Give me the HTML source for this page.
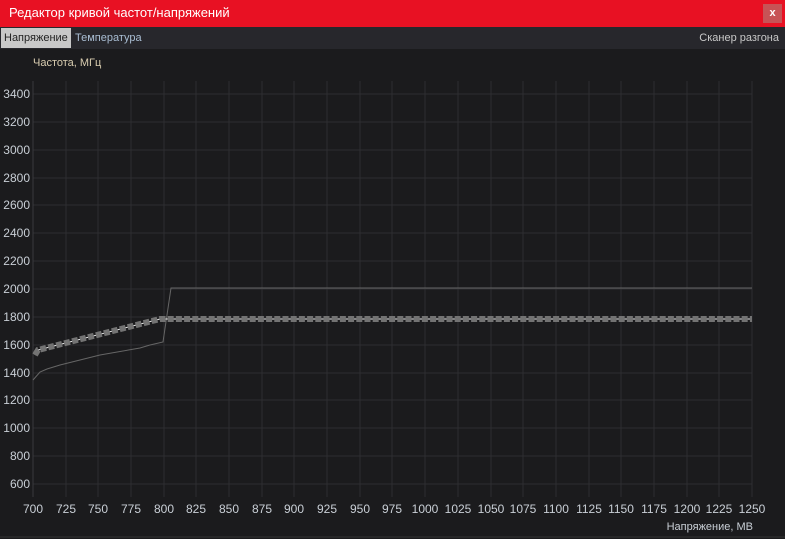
<!DOCTYPE html>
<html><head><meta charset="utf-8"><style>
body{margin:0;width:785px;height:539px;background:#1b1b1d;font-family:"Liberation Sans",sans-serif;overflow:hidden;position:relative}
.title{position:absolute;left:0;top:0;width:785px;height:27px;background:#e81123;color:#fff;font-size:13px;line-height:26px;padding-left:9px;box-sizing:border-box}
.x{position:absolute;right:3px;top:4px;width:19px;height:19px;background:#c75356;color:#fff;font-size:11px;font-weight:bold;text-align:center;line-height:18px}
.tabs{position:absolute;top:27px;left:0;width:785px;height:22px;background:#27272c;font-size:11px;line-height:22px;color:#a9bdd3}
.t1{position:absolute;left:1px;top:1px;height:20px;line-height:20px;padding:0 3px;background:#c8c8c8;color:#222}
.t2{position:absolute;left:75px}
.t3{position:absolute;right:6px;color:#c8c8c8}
svg{position:absolute;left:0;top:0}
text{font-family:"Liberation Sans",sans-serif;font-size:12px;fill:#c9cfd6}
</style></head><body>
<div class="title">Редактор кривой частот/напряжений</div><div class="x">x</div>
<div class="tabs"><span class="t1">Напряжение</span><span class="t2">Температура</span><span class="t3">Сканер разгона</span></div>
<svg width="785" height="539">
<text x="33" y="66" style="fill:#d9cdb0;font-size:11px">Частота, МГц</text>
<g stroke="#2e2e31" stroke-width="1">
<path d="M33 94H752M33 122H752M33 150H752M33 178H752M33 205H752M33 233H752M33 261H752M33 289H752M33 317H752M33 345H752M33 373H752M33 400H752M33 428H752M33 456H752M33 484H752"/>
<path d="M66 81V497M98 81V497M131 81V497M164 81V497M196 81V497M229 81V497M262 81V497M294 81V497M327 81V497M360 81V497M392 81V497M425 81V497M458 81V497M491 81V497M523 81V497M556 81V497M589 81V497M621 81V497M654 81V497M687 81V497M719 81V497M752 81V497"/>
</g>
<path d="M33 81V497" stroke="#3a3a3d"/>
<g text-anchor="end">
<text x="30" y="98">3400</text><text x="30" y="126">3200</text><text x="30" y="154">3000</text><text x="30" y="182">2800</text><text x="30" y="209">2600</text><text x="30" y="237">2400</text><text x="30" y="265">2200</text><text x="30" y="293">2000</text><text x="30" y="321">1800</text><text x="30" y="349">1600</text><text x="30" y="377">1400</text><text x="30" y="404">1200</text><text x="30" y="432">1000</text><text x="30" y="460">800</text><text x="30" y="488">600</text>
</g>
<g text-anchor="middle">
<text x="33" y="513">700</text><text x="66" y="513">725</text><text x="98" y="513">750</text><text x="131" y="513">775</text><text x="164" y="513">800</text><text x="196" y="513">825</text><text x="229" y="513">850</text><text x="262" y="513">875</text><text x="294" y="513">900</text><text x="327" y="513">925</text><text x="360" y="513">950</text><text x="392" y="513">975</text><text x="425" y="513">1000</text><text x="458" y="513">1025</text><text x="491" y="513">1050</text><text x="523" y="513">1075</text><text x="556" y="513">1100</text><text x="589" y="513">1125</text><text x="621" y="513">1150</text><text x="654" y="513">1175</text><text x="687" y="513">1200</text><text x="719" y="513">1225</text><text x="752" y="513">1250</text>
</g>
<text x="753" y="530" text-anchor="end" style="font-size:11px">Напряжение, МВ</text>
<path d="M33 380L40 372L47 369L60 365L100 355L140 348L150 345L163 342L171 288H752" fill="none" stroke="#666" stroke-width="1"/>
<path d="M35 355L38 350L160 319H752" fill="none" stroke="#eee" stroke-width="1"/>
<path d="M35 355L38 350L160 319H752" fill="none" stroke="#737373" stroke-width="6" stroke-dasharray="6 2.2"/>
<path d="M0 537H785" stroke="#333"/>
</svg>
</body></html>
